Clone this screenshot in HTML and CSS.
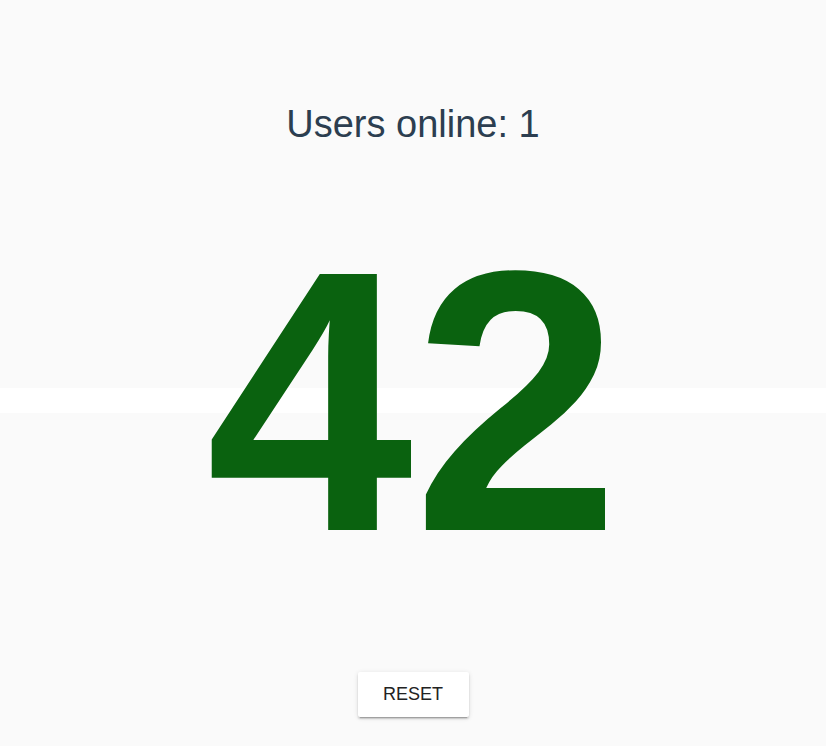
FILE: index.html
```html
<!DOCTYPE html>
<html>
<head>
<meta charset="utf-8">
<link rel="stylesheet" href="styles.css">
</head>
<body>
<main class="app">
  <h1 class="users">Users online: 1</h1>
  <div class="count">42</div>
  <button class="reset">RESET</button>
</main>
</body>
</html>
```
FILE: styles.css
```css
html, body {
  margin: 0;
  padding: 0;
}
body {
  background: linear-gradient(to bottom, #fafafa 0, #fafafa 388px, #ffffff 388px, #ffffff 413px, #fafafa 413px);
  background-repeat: no-repeat;
  background-color: #fafafa;
  min-height: 746px;
  font-family: "Liberation Sans", Arial, sans-serif;
}
.app {
  display: flex;
  flex-direction: column;
  align-items: center;
  padding-top: 102px;
}
.users {
  margin: 0;
  font-size: 38px;
  line-height: 44px;
  font-weight: normal;
  color: #2c3e50;
}
.count {
  margin-top: 69px;
  font-size: 372px;
  line-height: 372px;
  font-weight: bold;
  color: #0a620f;
}
.reset {
  margin-top: 85px;
  width: 111px;
  height: 45px;
  border: none;
  border-radius: 2px;
  background: #ffffff;
  color: #222222;
  font-family: "Liberation Sans", Arial, sans-serif;
  font-size: 18px;
  box-shadow: 0 3px 1px -2px rgba(0,0,0,.2), 0 2px 2px 0 rgba(0,0,0,.14), 0 1px 5px 0 rgba(0,0,0,.12);
  cursor: pointer;
}
```
